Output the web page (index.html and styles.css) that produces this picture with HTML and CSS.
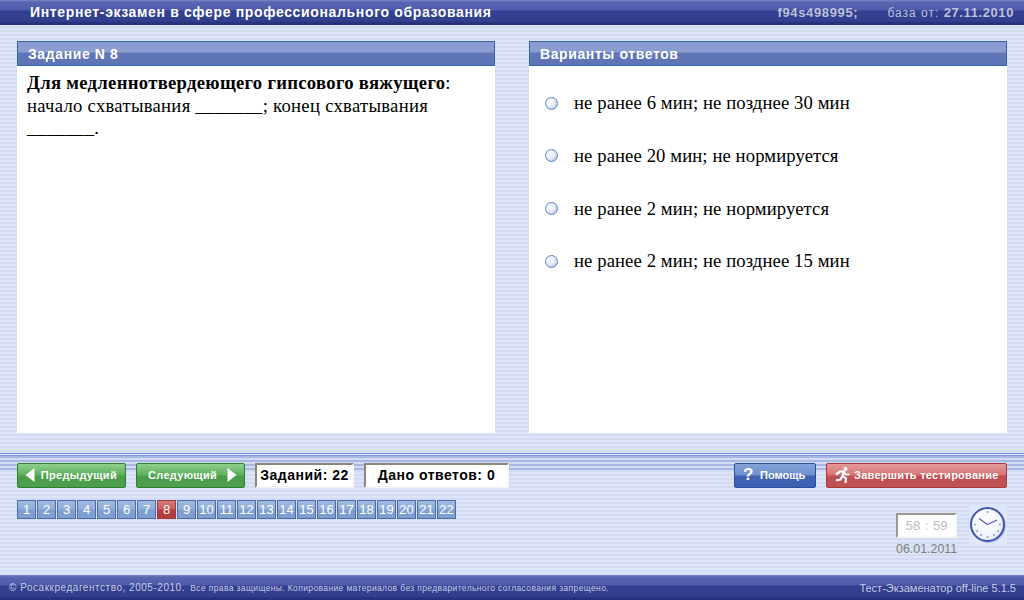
FILE: index.html
```html
<!DOCTYPE html>
<html>
<head>
    <meta charset="UTF-8">
    <title>Интернет-экзамен</title>
    <link rel="stylesheet" href="styles.css">
</head>
<body>
<div id="header">
    <div class="header-title">Интернет-экзамен в сфере профессионального образования</div>
    <div class="header-info">
        <span class="header-id">f94s498995;</span>
        <span class="header-base">база от: <b>27.11.2010</b></span>
    </div>
</div>

<div id="content">
    <div class="panel">
        <div class="panel-title">Задание N 8</div>
        <div class="question">
            <b>Для медленнотвердеющего гипсового вяжущего</b>:<br>
            начало схватывания _______; конец схватывания<br>
            _______.
        </div>
    </div>
    <div class="panel">
        <div class="panel-title">Варианты ответов</div>
        <div class="answers">
            <div class="answer"><span class="radio"></span>не ранее 6 мин; не позднее 30 мин</div>
            <div class="answer"><span class="radio"></span>не ранее 20 мин; не нормируется</div>
            <div class="answer"><span class="radio"></span>не ранее 2 мин; не нормируется</div>
            <div class="answer"><span class="radio"></span>не ранее 2 мин; не позднее 15 мин</div>
        </div>
    </div>
</div>

<div id="toolbar">
    <div class="toolbar-row">
        <button class="btn btn-nav">
            <svg width="12" height="16" viewBox="0 0 12 16"><path d="M10.5 1V15L1.5 8Z" fill="#fff"/></svg>
            <span>Предыдущий</span>
        </button>
        <button class="btn btn-nav btn-next">
            <span>Следующий</span>
            <svg width="12" height="16" viewBox="0 0 12 16"><path d="M1.5 1V15L10.5 8Z" fill="#fff"/></svg>
        </button>
        <div class="counter counter-tasks">Заданий: 22</div>
        <div class="counter counter-answers">Дано ответов: 0</div>
        <button class="btn btn-help"><span class="help-mark">?</span><span>Помощь</span></button>
        <button class="btn btn-finish">
            <svg width="18" height="18" viewBox="0 0 18 18">
                <circle cx="11.5" cy="3" r="2" fill="#fff"/>
                <path d="M2 8.5L6 5.5H10L8.5 10L12 12.5L11.5 17M8 10.5L6.5 13.5L2 14.5M10 6.5L12 8.5H15.5" fill="none" stroke="#fff" stroke-width="2.2"/>
            </svg>
            <span>Завершить тестирование</span>
        </button>
    </div>
    <div class="status-row">
        <div class="pager">
            <a class="page">1</a><a class="page">2</a><a class="page">3</a><a class="page">4</a><a class="page">5</a><a class="page">6</a><a class="page">7</a><a class="page current">8</a><a class="page">9</a><a class="page">10</a><a class="page">11</a>
            <a class="page">12</a><a class="page">13</a><a class="page">14</a><a class="page">15</a><a class="page">16</a><a class="page">17</a><a class="page">18</a><a class="page">19</a><a class="page">20</a><a class="page">21</a><a class="page">22</a>
        </div>
        <div class="time-block">
            <div class="timer">58 : 59</div>
            <div class="date">06.01.2011</div>
        </div>
        <svg class="clock" width="38" height="38" viewBox="0 0 38 38">
            <defs>
                <radialGradient id="face" cx="0.4" cy="0.35" r="0.8">
                    <stop offset="0" stop-color="#ffffff"/>
                    <stop offset="0.7" stop-color="#f0f3fc"/>
                    <stop offset="1" stop-color="#c3cfee"/>
                </radialGradient>
            </defs>
            <circle cx="19.5" cy="19.5" r="17.5" fill="#9aa8d6" opacity="0.6"/>
            <circle cx="18.5" cy="18.5" r="16.5" fill="url(#face)" stroke="#3e51ab" stroke-width="2"/>
            <g fill="#8d9ccf">
                <circle cx="18.5" cy="6" r="1"/><circle cx="18.5" cy="31" r="1"/><circle cx="6" cy="18.5" r="1"/><circle cx="31" cy="18.5" r="1"/>
                <circle cx="12" cy="29" r="1"/><circle cx="25" cy="29" r="1"/><circle cx="8" cy="25" r="1"/><circle cx="29" cy="25" r="1"/>
            </g>
            <path d="M18.5 18.5L10 12.5M18.5 18.5L28 14" fill="none" stroke="#4a5a9e" stroke-width="1.2"/>
        </svg>
    </div>
</div>

<div id="footer">
    <div class="copyright">© Росаккредагентство, 2005-2010. <small>Все права защищены. Копирование материалов без предварительного согласования запрещено.</small></div>
    <div class="version">Тест-Экзаменатор off-line 5.1.5</div>
</div>
</body>
</html>
```

FILE: styles.css
```css
html, body {
    height: 100%;
}
body {
    margin: 0;
    width: 1024px;
    height: 600px;
    overflow: hidden;
    display: flex;
    flex-direction: column;
    font-family: 'Liberation Sans', Arial, sans-serif;
    background: repeating-linear-gradient(to bottom, #dde4f8 0, #dde4f8 2px, #d2dbf1 2px, #d2dbf1 4px);
}

/* top and bottom bars */
#header, #footer {
    display: flex;
    justify-content: space-between;
    align-items: center;
    box-sizing: border-box;
    background: linear-gradient(to bottom, #7b85c6 0, #5b66b2 2px, #4f5aa9 10px, #333f8f 11px, #333f8f 21px, #28327c 23px, #28327c 100%);
}
#header {
    height: 25px;
    padding: 0 10px 1px 30px;
}
.header-title {
    color: #fff;
    font-size: 14px;
    font-weight: bold;
    letter-spacing: 0.65px;
}
.header-info {
    display: flex;
    color: #bcc2dc;
    font-size: 12px;
}
.header-id {
    width: 110px;
    font-size: 13px;
    font-weight: bold;
    letter-spacing: 0.65px;
}
.header-base {
    letter-spacing: 1px;
}
.header-base b {
    font-size: 13px;
    letter-spacing: 0.6px;
}

/* panels */
#content {
    height: 392px;
    padding: 16px 17px 20px 17px;
    display: grid;
    grid-template-columns: 478px 478px;
    column-gap: 34px;
}
.panel {
    display: flex;
    flex-direction: column;
    background-color: #fff;
}
.panel-title {
    box-sizing: border-box;
    height: 25px;
    padding: 1px 0 0 10px;
    line-height: 22px;
    border: 1px solid #2f69a5;
    color: #fff;
    font-size: 14px;
    font-weight: bold;
    letter-spacing: 0.6px;
    background: linear-gradient(to bottom, #8a9cd2 0, #8c9dd0 10px, #6076b8 11px, #5f74b5 100%);
}
.question {
    padding: 6px 10px;
    font-family: 'Liberation Serif', 'Times New Roman', serif;
    font-size: 18.67px;
    letter-spacing: 0.28px;
    line-height: 22.5px;
    color: #000;
}
.question b {
    letter-spacing: 0.3px;
}
.answers {
    padding: 11px 16px;
}
.answer {
    display: flex;
    align-items: center;
    height: 52.67px;
    font-family: 'Liberation Serif', 'Times New Roman', serif;
    font-size: 18.67px;
    letter-spacing: 0.1px;
    color: #000;
}
.radio {
    box-sizing: border-box;
    width: 13px;
    height: 13px;
    margin-right: 16px;
    border: 1px solid #5f84c2;
    border-radius: 50%;
    background: radial-gradient(circle at 35% 35%, #ffffff 0, #e6ecf9 45%, #a0b8e0 100%);
}

/* toolbar */
#toolbar {
    height: 122px;
    box-sizing: border-box;
    padding: 10px 17px 0 17px;
    background:
        linear-gradient(to bottom, #6f8fd2 0, #6f8fd2 1px, #e8edfb 1px, #e8edfb 2px, #7f9ad8 2px, #7f9ad8 3px, transparent 3px) no-repeat top left / 100% 3px,
        repeating-linear-gradient(to bottom, rgba(100, 130, 205, 0.45) 0, rgba(100, 130, 205, 0.45) 2px, transparent 2px, transparent 4px) no-repeat left 3px / 100% 14px;
}
.toolbar-row {
    display: flex;
    align-items: stretch;
    height: 25px;
}
.btn {
    box-sizing: border-box;
    display: flex;
    align-items: center;
    padding: 0;
    margin: 0;
    border-radius: 2px;
    color: #fff;
    font-family: 'Liberation Sans', Arial, sans-serif;
    font-size: 11px;
    font-weight: bold;
    letter-spacing: 0.3px;
}
.btn-nav {
    width: 109px;
    margin-right: 10px;
    padding: 0 8px 1px 6px;
    justify-content: space-between;
    border: 1px solid #2a822c;
    background: linear-gradient(to bottom, #8fcf8d 0, #5cb05c 11px, #4a9c4a 12px, #4f9f4f 100%);
}
.btn-next {
    padding: 0 6px 1px 11px;
}
.counter {
    box-sizing: border-box;
    margin-right: 10px;
    border: 2px solid #f6f6f2;
    border-top-color: #8b8775;
    border-left-color: #8b8775;
    background-color: #fff;
    color: #000;
    font-size: 14px;
    font-weight: bold;
    letter-spacing: 0.5px;
    line-height: 21px;
    text-align: center;
    white-space: nowrap;
}
.counter-tasks {
    width: 99px;
}
.counter-answers {
    width: 145px;
    margin-right: 225px;
}
.btn-help {
    width: 82px;
    margin-right: 10px;
    padding: 0 0 1px 8px;
    border: 1px solid #2a4f9c;
    letter-spacing: 0;
    background: linear-gradient(to bottom, #84a3d8 0, #6f8fcf 11px, #3f62b5 12px, #3e60b2 100%);
}
.help-mark {
    width: 17px;
    text-align: left;
    font-size: 17px;
}
.btn-finish {
    width: 181px;
    padding: 0 0 1px 7px;
    gap: 2px;
    border: 1px solid #a8383c;
    letter-spacing: 0.26px;
    background: linear-gradient(to bottom, #e59b9b 0, #d67373 11px, #bf4d50 12px, #c05355 100%);
}

/* pager, timer */
.status-row {
    display: flex;
    align-items: flex-start;
    padding-top: 12px;
}
.pager {
    display: flex;
    gap: 1px;
    width: 880px;
}
.page {
    box-sizing: border-box;
    width: 19px;
    height: 19px;
    border: 1px solid #4a6bb0;
    color: #fff;
    font-size: 13px;
    line-height: 18px;
    text-align: center;
    background: linear-gradient(to bottom, #a0b8de 0, #93aedb 8px, #7f9fd0 9px, #7f9fd0 100%);
}
.page.current {
    border-color: #a23a3a;
    background: linear-gradient(to bottom, #d77a78 0, #c9605e 8px, #b53c3a 9px, #b53c3a 100%);
}
.time-block {
    width: 61px;
    margin: 13px 12px 0 0;
}
.timer {
    box-sizing: border-box;
    height: 25px;
    border: 2px solid #f6f6f2;
    border-top-color: #9a9a92;
    border-left-color: #9a9a92;
    background-color: #fff;
    color: #bcbcbc;
    font-size: 13px;
    word-spacing: 1px;
    line-height: 21px;
    text-align: center;
}
.date {
    margin-top: 4px;
    color: #808080;
    font-size: 12.4px;
    text-align: center;
}
.clock {
    margin-top: 6px;
    background-color: #dfe7fb;
}

/* footer */
#footer {
    height: 25px;
    margin-top: auto;
    padding: 0 8px 0 9px;
    color: #c8cee6;
    font-size: 10px;
    letter-spacing: 0.53px;
}
#footer small {
    margin-left: 2px;
    font-size: 8.5px;
    letter-spacing: 0.37px;
}
.version {
    font-size: 11px;
    letter-spacing: 0;
}
```
